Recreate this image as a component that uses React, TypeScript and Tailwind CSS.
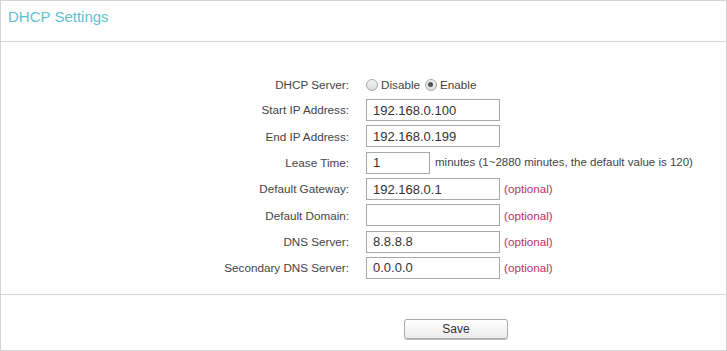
import React from "react";

const font = { fontFamily: '"Liberation Sans", Arial, sans-serif' };

function Label({ children }: { children: React.ReactNode }) {
  return (
    <div className="w-[349px] pr-[1px] text-right text-[11.7px] text-[#444] shrink-0">{children}</div>
  );
}

function Input({ value, w = "w-[134px]" }: { value: string; w?: string }) {
  return (
    <div className={`${w} h-[22px] border border-[#a8a8a8] bg-white flex items-center pl-[6px] text-[13px] text-[#333] leading-none`}>
      {value}
    </div>
  );
}

function Optional() {
  return <span className="ml-[4px] text-[11.7px] text-[#b8335f]">(optional)</span>;
}

function Row({ label, children }: { label: string; children: React.ReactNode }) {
  return (
    <div className="flex items-center h-[26.3px]">
      <Label>{label}</Label>
      <div className="ml-[16px] flex items-center">{children}</div>
    </div>
  );
}

function Radio({ checked }: { checked?: boolean }) {
  return (
    <span className="inline-flex w-[12px] h-[12px] rounded-full border border-[#a8a8a8] bg-gradient-to-b from-[#f4f4f4] to-[#dcdcdc] items-center justify-center">
      {checked && <span className="w-[5px] h-[5px] rounded-full bg-[#555]" />}
    </span>
  );
}

export default function App() {
  return (
    <div style={font} className="w-[727px] h-[351px] bg-white">
      <div className="w-[727px] h-[351px] border border-[#d4d4d4] flex flex-col">
        <div className="h-[41px] border-b border-[#d4d4d4] pl-[7px] pt-[5px] text-[15px] text-[#62c0d2]">
          DHCP Settings
        </div>
        <div className="pt-[32px]">
          <div className="flex items-center h-[22px]">
            <Label>DHCP Server:</Label>
            <div className="ml-[16px] flex items-center text-[11.7px] text-[#444]">
              <Radio />
              <span className="ml-[3px]">Disable</span>
              <span className="ml-[5px] flex"><Radio checked /></span>
              <span className="ml-[3px]">Enable</span>
            </div>
          </div>
          <div className="mt-[1px]">
            <Row label="Start IP Address:"><Input value="192.168.0.100" /></Row>
            <Row label="End IP Address:"><Input value="192.168.0.199" /></Row>
            <Row label="Lease Time:">
              <Input value="1" w="w-[64px]" />
              <span className="ml-[5px] text-[11.5px] text-[#444]">minutes (1~2880 minutes, the default value is 120)</span>
            </Row>
            <Row label="Default Gateway:"><Input value="192.168.0.1" /><Optional /></Row>
            <Row label="Default Domain:"><Input value="" /><Optional /></Row>
            <Row label="DNS Server:"><Input value="8.8.8.8" /><Optional /></Row>
            <Row label="Secondary DNS Server:"><Input value="0.0.0.0" /><Optional /></Row>
          </div>
        </div>
        <div className="mt-[13px] border-t border-[#d4d4d4] pl-[403px] pt-[21px]">
          <button className="w-[104px] h-[20px] rounded-[3px] border border-[#a9a9a9] bg-gradient-to-b from-white to-[#ececec] text-[12px] text-[#333] leading-none shadow-[0_1px_0_#bbb]">
            Save
          </button>
        </div>
      </div>
    </div>
  );
}
